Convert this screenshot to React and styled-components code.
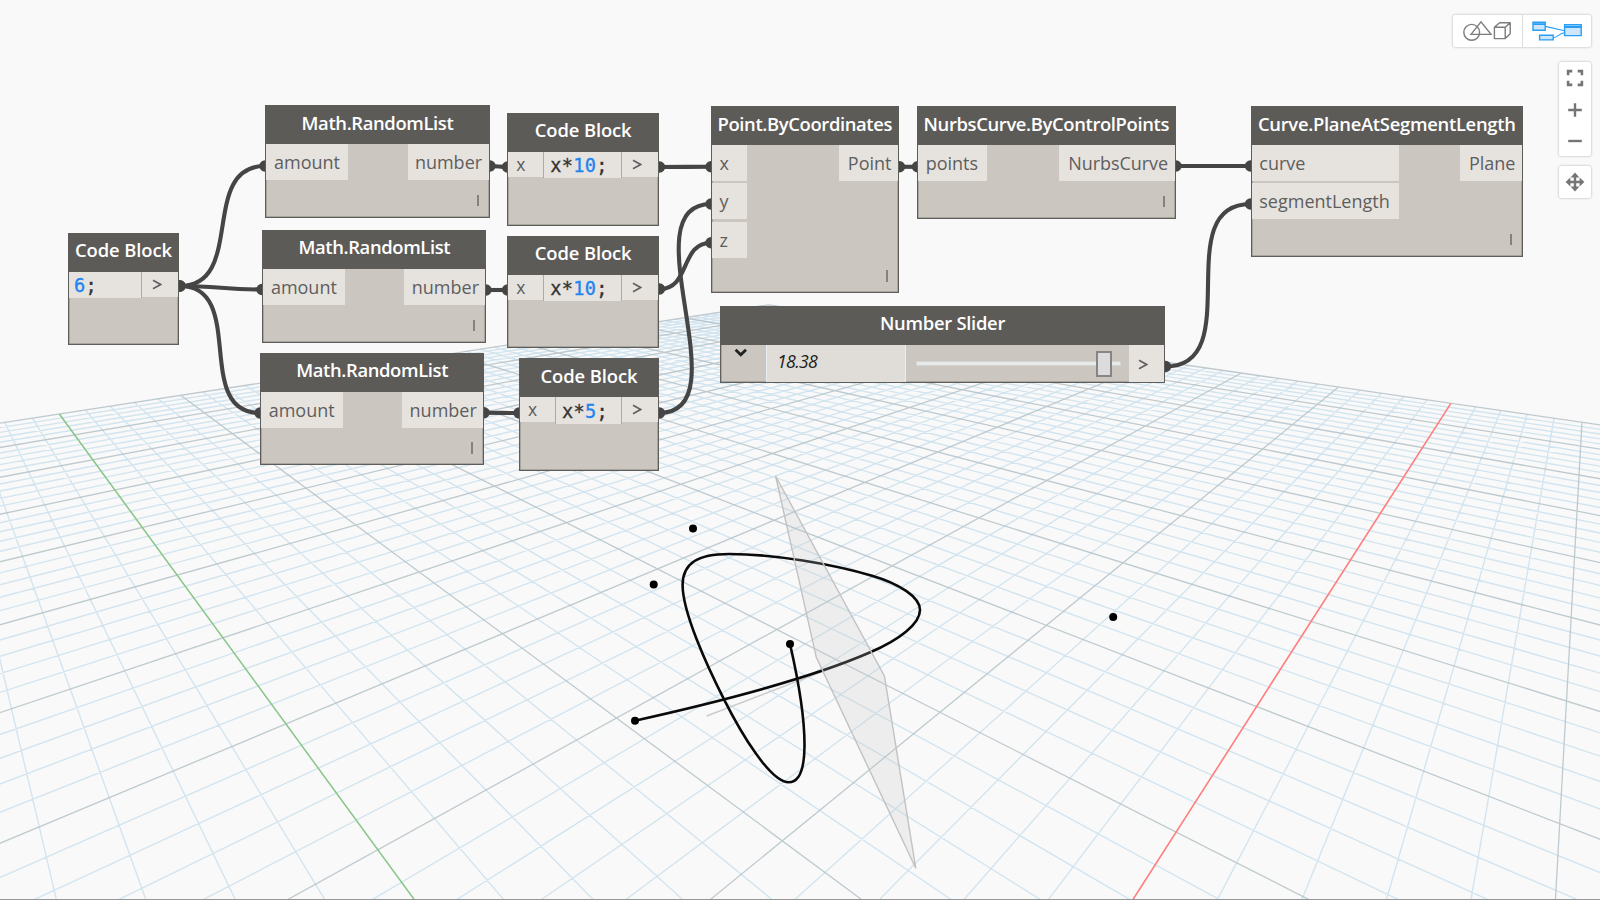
import React from "react";
import styled, { createGlobalStyle, css } from "styled-components";

const GlobalStyle = createGlobalStyle`
  * { box-sizing: border-box; }
  html, body { margin: 0; padding: 0; background: #f9f9f9; }
  body { overflow: hidden; }
`;

const Workspace = styled.main`
  position: relative;
  width: 1600px;
  height: 900px;
  overflow: hidden;
  background: #f9f9f9;
  border-bottom: 1px solid #979797;
  font-family: "Open Sans", "Noto Sans", sans-serif;
`;

const Layer = styled.svg`
  position: absolute;
  left: 0;
  top: 0;
  width: 1600px;
  height: 900px;
  display: block;
`;

/* ---------- graph nodes ---------- */

const NodeFrame = styled.section`
  position: absolute;
  left: ${(p) => p.$x}px;
  top: ${(p) => p.$y}px;
  width: ${(p) => p.$w}px;
  height: ${(p) => p.$h}px;
  display: flex;
  flex-direction: column;
  border: 1px solid #5f5d5a;
  box-shadow: inset 0 0 0 0.5px #85827e;
  background: #cbc6bf;
`;

const NodeHeader = styled.header`
  flex: 0 0 39px;
  margin: -1px -1px 0;
  display: flex;
  align-items: center;
  justify-content: center;
  padding-bottom: 4px;
  background: #5d5b58;
  color: #fff;
  font-size: 18.4px;
  font-weight: 600;
  line-height: 24px;
  white-space: nowrap;
  letter-spacing: ${(p) => p.$track ?? -0.36}px;
`;

const NodeBody = styled.div`
  flex: 1;
  display: flex;
  justify-content: space-between;
  align-items: flex-start;
  position: relative;
`;

const PortColumn = styled.div`
  display: flex;
  flex-direction: column;
  gap: 1.2px;
`;

const Port = styled.div`
  height: 36.4px;
  width: ${(p) => p.$w}px;
  margin-top: ${(p) => p.$gap || 0}px;
  padding: 0 ${(p) => (p.$out ? 6.5 : 0)}px 0 ${(p) => (p.$out ? 0 : 7.7)}px;
  display: flex;
  align-items: center;
  justify-content: ${(p) => (p.$out ? "flex-end" : "flex-start")};
  background: #e6e3df;
  color: #5e5e5e;
  font-size: 18px;
  line-height: 24px;
  white-space: nowrap;
  letter-spacing: ${(p) => p.$track || 0}px;
`;

const Lacing = styled.i`
  position: absolute;
  right: 10px;
  bottom: 10.5px;
  width: 2px;
  height: 11.5px;
  background: #85817d;
`;

const cell = css`
  display: flex;
  align-items: center;
  height: 25px;
  background: #e6e3df;
  color: #5c5c5c;
`;

const CodeRow = styled.div`
  flex: 1;
  display: flex;
  align-items: flex-start;
`;

const CodeInput = styled.div`
  ${cell}
  width: 35px;
  padding: 0 0 1px 8px;
  font-size: 17.5px;
`;

const CodeText = styled.code`
  ${cell}
  flex: 1;
  height: 26.5px;
  padding-top: 2px;
  padding-left: ${(p) => (p.$first ? 5 : 6)}px;
  border-left: ${(p) => (p.$first ? 0 : 1)}px solid #aeaaa5;
  border-right: 1px solid #aeaaa5;
  color: #333;
  font-family: "DejaVu Sans Mono", "Liberation Mono", monospace;
  font-size: 18.6px;
  letter-spacing: 0.3px;
  -webkit-text-stroke: 0.35px currentColor;
  white-space: pre;
`;

const Literal = styled.span`
  color: #1f84f0;
`;

const CodeOutput = styled.div`
  ${cell}
  width: 35.6px;
  justify-content: center;
  padding: 0 6px 0 0;
`;

const Chevron = ({ down }) =>
  down ? (
    <svg width="14" height="10" viewBox="0 0 14 10">
      <path d="M1.6 1.8L6.8 6.8L12 1.8" fill="none" stroke="#222" strokeWidth="2.8" />
    </svg>
  ) : (
    <svg width="10" height="11" viewBox="0 0 10 11">
      <path d="M1 1.2L8.6 5.5L1 9.8" fill="none" stroke="#606060" strokeWidth="1.6" />
    </svg>
  );

const SliderToggle = styled.div`
  width: 45px;
  height: 100%;
  padding: 3.5px 0 0 12.5px;
  line-height: 0;
`;

const SliderValue = styled.div`
  width: 140px;
  height: 100%;
  display: flex;
  align-items: center;
  padding: 0 0 5px 10px;
  background: #e0dcd7;
  border-left: 1px solid #e9edf2;
  border-right: 1px solid #e9edf2;
  color: #1c1c1c;
  font-size: 17.8px;
  font-style: italic;
  letter-spacing: -0.7px;
`;

const SliderTrack = styled.div`
  flex: 1;
  height: 100%;
  display: flex;
  align-items: center;
  padding: 1px 8px 0 10px;
`;

const Rail = styled.div`
  position: relative;
  flex: 1;
  height: 5px;
  background: #e8eaea;
  border: 1px solid #d3d4d4;
`;

const Thumb = styled.div`
  position: absolute;
  right: 7.5px;
  top: -11.5px;
  width: 16px;
  height: 26px;
  background: #dcdcdc;
  border: 2px solid #858585;
`;

const SliderPort = styled.div`
  width: 35.5px;
  height: 100%;
  display: flex;
  align-items: center;
  justify-content: center;
  padding-right: 6px;
  padding-top: 2px;
  background: #e6e3df;
`;

/* ---------- toolbars ---------- */

const Tools = styled.nav`
  position: absolute;
  right: 9px;
  top: 15px;
  display: flex;
  flex-direction: column;
  align-items: flex-end;
`;

const ToolGroup = styled.div`
  display: flex;
  flex-direction: ${(p) => (p.$vertical ? "column" : "row")};
  margin-top: ${(p) => p.$gap || 0}px;
  background: #fff;
  border-radius: 2px;
  box-shadow: 0 0 2.5px rgba(0, 0, 0, 0.32);
`;

const ToolButton = styled.button`
  display: flex;
  align-items: center;
  justify-content: center;
  width: ${(p) => p.$w || 32.5}px;
  height: ${(p) => p.$h || 32}px;
  padding: 0 ${(p) => p.$shift || 0}px 0 0;
  border: 0;
  border-left: ${(p) => (p.$divided ? 1 : 0)}px solid #ddd;
  background: none;
`;

const GeometryIcon = () => (
  <svg width="52" height="24" viewBox="0 0 52 24" fill="none" stroke="#7c7c7c" strokeWidth="1.4">
    <circle cx="10.7" cy="13.3" r="7.9" />
    <path d="M10 15.4L20 2.9L30 15.4Z" />
    <path d="M33.4 8.3h10.8v11.3H33.4zM33.4 8.3l5.2-4.6h10.6l-5 4.6M49.2 3.7v11l-5 4.9" strokeLinejoin="round" />
  </svg>
);

const GraphIcon = () => (
  <svg width="50" height="20" viewBox="0 0 50 20" fill="#cde6fa" stroke="#2a9df4" strokeWidth="1.4">
    <path d="M13.3 5.4L32.6 9.7M21 16.7c5 0 6-4.5 11.6-5" fill="none" strokeWidth="1.1" />
    <path d="M1 1.2h12.2v8H1zM7.6 14.3h13.6v4.6H7.6zM32.6 3.8h16.6v10.8H32.6z" />
    <path d="M1 3.2h12.2M32.6 6h16.6" strokeWidth="1.8" />
  </svg>
);

const FitIcon = () => (
  <svg width="18" height="18" viewBox="0 0 18 18" fill="none" stroke="#757575" strokeWidth="2.6">
    <path d="M2.1 6.3V2.1H6.3M11.7 2.1H15.9V6.3M15.9 11.7V15.9H11.7M6.3 15.9H2.1V11.7" />
  </svg>
);

const PlusIcon = () => (
  <svg width="16" height="16" viewBox="0 0 16 16" stroke="#757575" strokeWidth="2.4">
    <path d="M8 1.2V14.8M1.2 8H14.8" />
  </svg>
);

const MinusIcon = () => (
  <svg width="16" height="16" viewBox="0 0 16 16" stroke="#757575" strokeWidth="2.4">
    <path d="M1.2 8H14.8" />
  </svg>
);

const PanIcon = () => (
  <svg width="20" height="20" viewBox="0 0 20 20" fill="#757575" stroke="#757575">
    <path d="M10 3V17M3 10H17" strokeWidth="2.4" />
    <path d="M10 0.6L14.4 5.4H5.6zM10 19.4L14.4 14.6H5.6zM0.6 10L5.4 5.6V14.4zM19.4 10L14.6 5.6V14.4z" stroke="none" />
  </svg>
);

/* ---------- ground grid in perspective ---------- */

const ORIGIN = [797.2, 1423.5];
const VANISH_U = [-113.6, 177.4];
const VANISH_V = [1595.6, 177.4];
const RATE_U = 0.4266;
const RATE_V = 0.4516;

const depth = (u, v) => 1 + RATE_U * u + RATE_V * v;

const project = (u, v) => {
  const w = depth(u, v);
  return [0, 1].map(
    (k) => ((ORIGIN[k] + RATE_U * u * VANISH_U[k] + RATE_V * v * VANISH_V[k]) / w).toFixed(2)
  );
};

// Segment along one grid direction, cut where it would pass behind the camera.
const gridSegment = (fixed, alongU) => {
  const rate = alongU ? RATE_U : RATE_V;
  const other = alongU ? RATE_V : RATE_U;
  const start = Math.max(-10, (0.4 - 1 - other * fixed) / rate);
  if (start >= 10) return "";
  const a = alongU ? project(start, fixed) : project(fixed, start);
  const b = alongU ? project(10, fixed) : project(fixed, 10);
  return `M${a.join(" ")}L${b.join(" ")}`;
};

const steps = Array.from({ length: 101 }, (_, i) => i - 50);
const gridPath = (list) => list.map((i) => gridSegment(i / 5, true) + gridSegment(i / 5, false)).join("");
const minorPath = gridPath(steps.filter((i) => i % 5 !== 0));
const majorPath = gridPath(steps.filter((i) => i % 5 === 0 && i !== 0));

const CONTROL_POINTS = [
  [790, 644],
  [653.7, 584.6],
  [693, 528.4],
  [1113.2, 617],
  [635, 720.7],
];

const Scene = () => (
  <Layer viewBox="0 0 1600 900" fill="none">
    <path d={minorPath} stroke="#c8dfec" strokeWidth="1.35" strokeOpacity="0.8" />
    <path d={majorPath} stroke="#b4c2c8" strokeWidth="1.3" strokeOpacity="0.85" />
    <path d={gridSegment(0, true)} stroke="#86c586" strokeWidth="1.5" />
    <path d={gridSegment(0, false)} stroke="#ff7d7d" strokeWidth="1.6" />
    <path d="M706.7 716L850 661" stroke="#cacaca" strokeWidth="1.4" />
    <path
      d="M790 644C795.5 668 804.8 712 804.5 746C804.3 769 799 782.3 788.7 782.3C770 782 741 733 724 699.3C706 664 682.6 612 682.6 585C682.6 563 698 554 729 554C775 554 832 564 872 575.7C899 583.6 920 597 920 610C920 624 899 640 870.3 652.3C810 678.5 710 704 634.8 720.7"
      stroke="#0a0a0a"
      strokeWidth="2.6"
    />
    <path
      d="M775.6 476L884.4 676L915.8 868.3L816.3 657.3Z"
      fill="#c4c4c4"
      fillOpacity="0.22"
      stroke="#c2c2c2"
      strokeWidth="1.4"
    />
    {CONTROL_POINTS.map(([x, y]) => (
      <circle key={x} cx={x} cy={y} r="4" fill="#000" />
    ))}
  </Layer>
);

/* ---------- wires ---------- */

const WIRES = [
  [180, 286, 265, 166],
  [180, 286, 262, 289.5],
  [180, 286, 260, 413],
  [490, 166, 507.5, 167],
  [486, 290, 507.5, 290],
  [484, 412.8, 519, 413],
  [659.5, 167, 711, 166.8],
  [659.5, 289, 711, 242.7],
  [659.5, 413, 711, 204],
  [899.5, 166.8, 917.5, 166.8],
  [1176, 166, 1250.5, 166],
  [1165.5, 366.5, 1250.5, 204],
];

const wirePath = ([x1, y1, x2, y2]) => {
  const bend = Math.min(84, 0.45 * Math.hypot(x2 - x1, y2 - y1));
  return `M${x1} ${y1}C${x1 + bend} ${y1} ${x2 - bend} ${y2} ${x2} ${y2}`;
};

const Wires = () => (
  <Layer viewBox="0 0 1600 900" fill="none" stroke="#454545" strokeWidth="4.1">
    {WIRES.map((w) => (
      <g key={w.join()}>
        <path d={wirePath(w)} />
        <circle cx={w[0]} cy={w[1]} r="5.7" fill="#454545" stroke="none" />
        <circle cx={w[2]} cy={w[3]} r="5.7" fill="#454545" stroke="none" />
      </g>
    ))}
  </Layer>
);

/* ---------- node kinds ---------- */

const FunctionNode = ({ x, y, w, h, title, track, inputs, output }) => (
  <NodeFrame $x={x} $y={y} $w={w} $h={h}>
    <NodeHeader $track={track}>{title}</NodeHeader>
    <NodeBody>
      <PortColumn>
        {inputs.map((p) => (
          <Port key={p.name} $w={p.w} $gap={p.gap} $track={p.track}>
            {p.name}
          </Port>
        ))}
      </PortColumn>
      <Port $out $w={output.w} $track={output.track}>
        {output.name}
      </Port>
      <Lacing />
    </NodeBody>
  </NodeFrame>
);

const CodeNode = ({ x, y, w, h, input, prefix, value }) => (
  <NodeFrame $x={x} $y={y} $w={w} $h={h}>
    <NodeHeader $track={-0.1}>Code Block</NodeHeader>
    <CodeRow>
      {input && <CodeInput>{input}</CodeInput>}
      <CodeText $first={!input}>
        {prefix}
        <Literal>{value}</Literal>;
      </CodeText>
      <CodeOutput>
        <Chevron />
      </CodeOutput>
    </CodeRow>
  </NodeFrame>
);

const RandomList = (props) => (
  <FunctionNode
    w={224.3}
    h={112.6}
    title="Math.RandomList"
    inputs={[{ name: "amount", w: 81.5 }]}
    output={{ name: "number", w: 81 }}
    {...props}
  />
);

export default function App() {
  return (
    <>
      <GlobalStyle />
      <Workspace>
        <Scene />
        <Wires />
        <CodeNode x={68} y={232.7} w={111} h={112.6} value="6" />
        <RandomList x={265.3} y={105} />
        <RandomList x={262.2} y={229.5} h={113.2} />
        <RandomList x={260} y={352.7} />
        <CodeNode x={507.3} y={112.7} w={151.7} h={113.2} input="x" prefix="x*" value="10" />
        <CodeNode x={507.3} y={235.6} w={151.7} h={112.4} input="x" prefix="x*" value="10" />
        <CodeNode x={519} y={358} w={140} h={113.3} input="x" prefix="x*" value="5" />
        <FunctionNode
          x={710.7}
          y={106}
          w={188.3}
          h={187}
          title="Point.ByCoordinates"
          inputs={[
            { name: "x", w: 35.5 },
            { name: "y", w: 35.5 },
            { name: "z", w: 35.5, gap: 1.4 },
          ]}
          output={{ name: "Point", w: 58.5 }}
        />
        <FunctionNode
          x={917}
          y={106}
          w={258.6}
          h={112.6}
          title="NurbsCurve.ByControlPoints"
          inputs={[{ name: "points", w: 69 }]}
          output={{ name: "NurbsCurve", w: 116, track: -0.05 }}
        />
        <FunctionNode
          x={1250.6}
          y={106}
          w={272.4}
          h={150.6}
          title="Curve.PlaneAtSegmentLength"
          track={-0.28}
          inputs={[
            { name: "curve", w: 147 },
            { name: "segmentLength", w: 147 },
          ]}
          output={{ name: "Plane", w: 61.5 }}
        />
        <NodeFrame $x={720} $y={305.6} $w={445} $h={77.4}>
          <NodeHeader $track={-0.27}>Number Slider</NodeHeader>
          <NodeBody>
            <SliderToggle>
              <Chevron down />
            </SliderToggle>
            <SliderValue>18.38</SliderValue>
            <SliderTrack>
              <Rail>
                <Thumb />
              </Rail>
            </SliderTrack>
            <SliderPort>
              <Chevron />
            </SliderPort>
          </NodeBody>
        </NodeFrame>
        <Tools>
          <ToolGroup>
            <ToolButton $w={69} $shift={1.5}>
              <GeometryIcon />
            </ToolButton>
            <ToolButton $w={69} $divided>
              <GraphIcon />
            </ToolButton>
          </ToolGroup>
          <ToolGroup $vertical $gap={15}>
            <ToolButton>
              <FitIcon />
            </ToolButton>
            <ToolButton $h={31}>
              <PlusIcon />
            </ToolButton>
            <ToolButton $h={31}>
              <MinusIcon />
            </ToolButton>
          </ToolGroup>
          <ToolGroup $vertical $gap={10}>
            <ToolButton>
              <PanIcon />
            </ToolButton>
          </ToolGroup>
        </Tools>
      </Workspace>
    </>
  );
}
